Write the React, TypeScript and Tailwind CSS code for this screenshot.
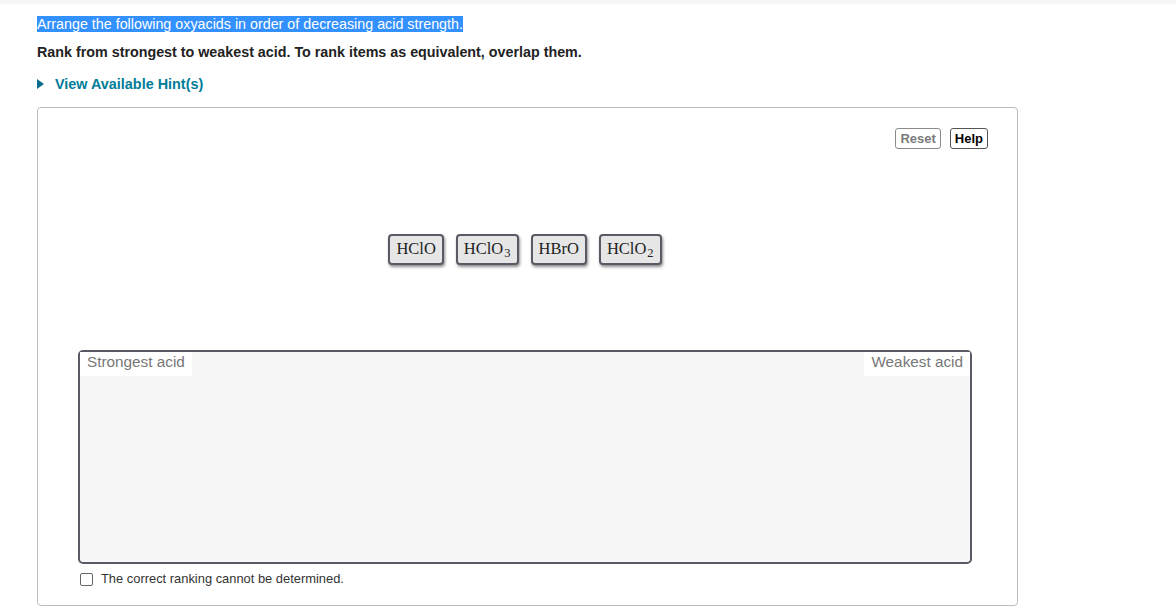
import React from 'react';

const chips = [
  { base: 'HClO', sub: '' },
  { base: 'HClO', sub: '3' },
  { base: 'HBrO', sub: '' },
  { base: 'HClO', sub: '2' },
];

export default function App() {
  return (
    <div className="min-h-[613px] bg-white font-['Liberation_Sans',Arial,sans-serif]">
      <div className="h-[4px] bg-[#f7f7f7]" />
      <div className="pl-[37px] pt-[12px]">
        <p className="text-[14.3px] leading-[16px]">
          <span className="bg-[#3390ff] text-white">Arrange the following oxyacids in order of decreasing acid strength.</span>
        </p>
        <p className="mt-[12px] text-[14.3px] leading-[16px] font-bold text-[#222]">
          Rank from strongest to weakest acid. To rank items as equivalent, overlap them.
        </p>
        <div className="mt-[16px] flex items-center gap-[11px] text-[14.4px] leading-[16px] font-bold text-[#007c99]">
          <svg width="7" height="10" viewBox="0 0 7 10">
            <path d="M0 0 L7 5 L0 10 Z" fill="#0a6f8c" />
          </svg>
          <span>View Available Hint(s)</span>
        </div>

        <div className="mt-[15px] w-[981px] h-[499px] rounded-[4px] border border-[#bdbdbd] flex flex-col">
          <div className="flex justify-end gap-[9px] pt-[20px] pr-[29px]">
            <button className="h-[21px] px-[4px] rounded-[3px] border border-[#8a8a8a] text-[13px] font-bold text-[#7a7a7a] bg-white leading-[17px]">
              Reset
            </button>
            <button className="h-[21px] px-[4px] rounded-[3px] border border-[#555] text-[13px] font-bold text-black bg-white leading-[17px]">
              Help
            </button>
          </div>

          <div className="mt-[85px] flex justify-center gap-[12px] pr-[5px]">
            {chips.map((c, i) => (
              <div
                key={i}
                className="h-[31px] px-[6px] rounded-[4px] border-2 border-[#5a5a66] bg-[#e6e6e6] shadow-[1px_2px_3px_rgba(0,0,0,0.45)] flex items-center font-['Liberation_Serif','Times_New_Roman',serif] text-[16.5px] text-[#222]"
              >
                <span>{c.base}</span>
                {c.sub && <sub className="ml-[1px] text-[12.5px] relative top-[3px] align-baseline">{c.sub}</sub>}
              </div>
            ))}
          </div>

          <div className="mt-[85px] ml-[40px] w-[894px] h-[214px] rounded-[5px] border-2 border-[#5a5a66] bg-[#f7f7f7] flex justify-between items-start">
            <span className="bg-white px-[7px] pt-[0px] pb-[5px] text-[15.3px] leading-[19px] text-[#777]">Strongest acid</span>
            <span className="bg-white px-[7px] pt-[0px] pb-[5px] text-[15.3px] leading-[19px] text-[#777]">Weakest acid</span>
          </div>

          <label className="mt-[7px] ml-[42px] flex items-center gap-[8px] text-[12.9px] leading-[16px] text-[#333]">
            <span className="w-[13px] h-[13px] rounded-[2px] border border-[#666] bg-white" />
            The correct ranking cannot be determined.
          </label>
        </div>
      </div>
    </div>
  );
}
